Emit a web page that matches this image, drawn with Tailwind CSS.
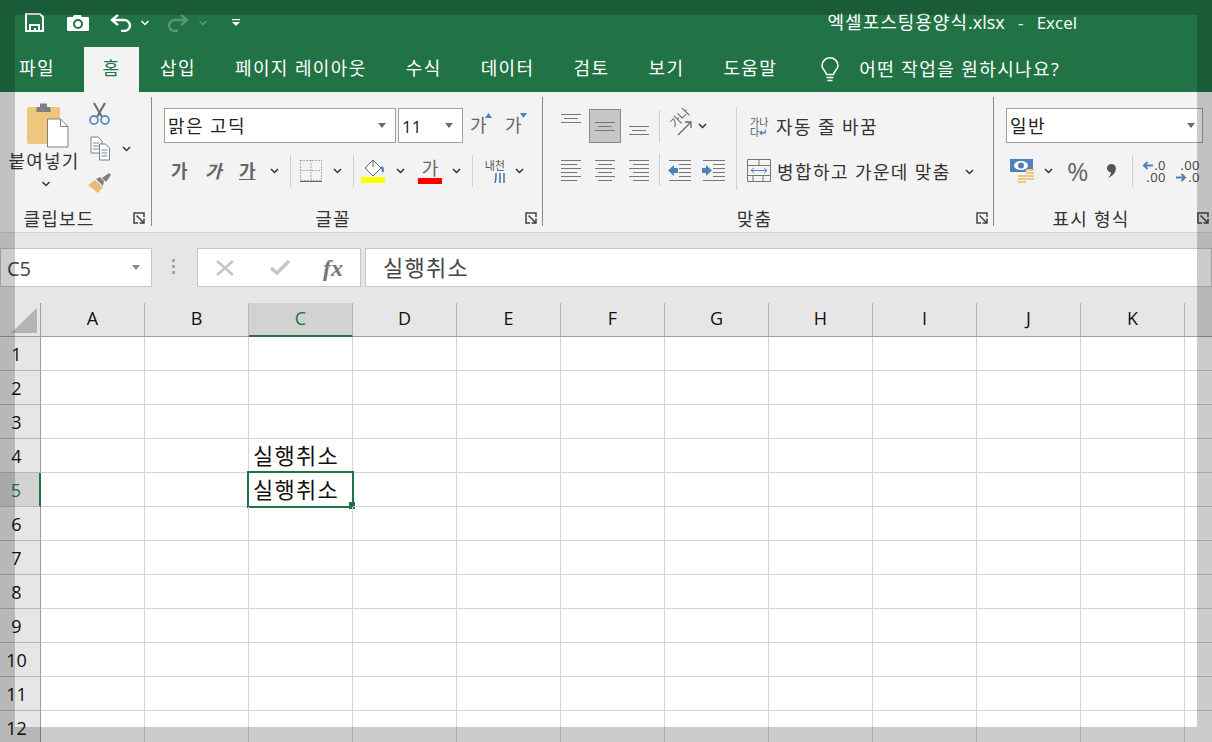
<!DOCTYPE html>
<html lang="ko">
  <head>
    <meta charset="UTF-8" />
    <script src="https://cdn.jsdelivr.net/npm/@tailwindcss/browser@4"></script>
    <title>엑셀포스팅용양식.xlsx - Excel</title>
  </head>
  <body class="relative w-[1212px] h-[742px] overflow-hidden bg-white text-[#222] font-['Open_Sans','Noto_Sans_CJK_KR',sans-serif]">
    <!-- 제목 표시줄 -->
    <div class="h-[47px] bg-[#217346] flex items-center text-white pb-[2px]">
      <svg class="ml-[25px]" width="19" height="19" viewBox="0 0 19 19" fill="none" stroke="#fff" stroke-width="2"><path d="M1 1h14l3 3v14H1z" /><path d="M5 18v-6h9v6" /><path d="M9 15h2v3H9z" fill="#fff" stroke="none" /></svg>
      <svg class="ml-[23px]" width="22" height="16" viewBox="0 0 22 16"><path fill="#fff" d="M1 2h5l1-2h7l1 2h6a1 1 0 0 1 1 1v12a1 1 0 0 1-1 1H1a1 1 0 0 1-1-1V3a1 1 0 0 1 1-1z" /><circle cx="11" cy="9" r="4" fill="none" stroke="#217346" stroke-width="2" /></svg>
      <svg class="ml-[21px]" width="22" height="18" viewBox="0 0 22 18" fill="none" stroke="#fff" stroke-width="2.4"><path d="M2 6h12a6 5.5 0 0 1 0 11h-3" /><path d="M8 0.8 2 6l6 5.2" /></svg>
      <svg class="ml-[9px]" width="8" height="6" viewBox="0 0 8 6" fill="none" stroke="#fff" stroke-width="1.5"><path d="M0.5 1 4 4.5 7.5 1" /></svg>
      <svg class="ml-[18px]" width="22" height="18" viewBox="0 0 22 18" fill="none" stroke="#5a9678" stroke-width="2.4"><path d="M20 6H8a6 5.5 0 0 0 0 11h3" /><path d="M14 0.8 20 6l-6 5.2" /></svg>
      <svg class="ml-[10px]" width="8" height="6" viewBox="0 0 8 6" fill="none" stroke="#5a9678" stroke-width="1.5"><path d="M0.5 1 4 4.5 7.5 1" /></svg>
      <svg class="ml-[25px]" width="8" height="7" viewBox="0 0 8 7"><path d="M0 0h8v1.3H0zM0 3h8L4 7z" fill="#fff" /></svg>
      <span class="ml-auto mr-[135px] text-[18px] whitespace-pre"><span class="tracking-[1px]">엑셀포스팅용양식</span>.xlsx<span class="text-[17px]">   -   Excel</span></span>
    </div>

    <!-- 탭 -->
    <div class="h-[45px] bg-[#217346] flex text-white text-[18px] tracking-[1.4px] leading-[43px]">
      <div class="w-[84px] pl-[19px]">파일</div>
      <div class="w-[55px] bg-[#f3f3f3] text-[#217346] text-center">홈</div>
      <div class="ml-[1px] pl-[20px] pr-[19px]">삽입</div>
      <div class="pl-[20px] pr-[19px]">페이지 레이아웃</div>
      <div class="pl-[20px] pr-[19px]">수식</div>
      <div class="pl-[20px] pr-[19px]">데이터</div>
      <div class="pl-[20px] pr-[19px]">검토</div>
      <div class="pl-[20px] pr-[19px]">보기</div>
      <div class="pl-[20px] pr-[19px]">도움말</div>
      <div class="ml-[25px] flex items-center gap-[20px]">
        <svg width="18" height="25" viewBox="0 0 18 25" fill="none" stroke="#fff" stroke-width="1.6"><path d="M5.5 17.5C5 14 1 12.500 1 8.500a8 7.700 0 0 1 16 0c0 4-4 5.500-4.500 9z" /><path d="M5.500 20.500h7M6.500 23.500h5" /></svg>
        <span>어떤 작업을 원하시나요?</span>
      </div>
    </div>

    <!-- 리본 -->
    <div class="h-[141px] bg-[#f3f3f3] border-b border-[#d2d2d2] flex pt-[5px] text-[#333]">
      <!-- 클립보드 -->
      <div class="w-[152px] h-[129px] border-r border-[#8a8a8a] flex flex-col">
        <div class="flex">
          <div class="w-[88px] flex flex-col items-center pt-[5px]">
            <svg class="ml-[7px]" width="42" height="46" viewBox="0 0 42 46"><rect x="0" y="5" width="33" height="37" rx="2" fill="#efc67e" /><path d="M10 5h3V1.500h7V5h3l1 5H9z" fill="#7f7f7f" /><path d="M20.500 17h13l7.500 7.500V45H20.500z" fill="#fff" stroke="#7f7f7f" stroke-width="1" /><path d="M33.500 17v7.500H41" fill="none" stroke="#7f7f7f" /></svg>
            <span class="text-[18px] tracking-[1.2px] leading-[24px] mt-[1px] whitespace-nowrap">붙여넣기</span>
            <svg class="mt-[8px] ml-[3px]" width="8" height="6" viewBox="0 0 8 6" fill="none" stroke="#333" stroke-width="1.500"><path d="M0.500 1 4 4.500 7.500 1" /></svg>
          </div>
          <div class="flex flex-col pt-[5px]">
            <svg class="ml-[1px]" width="21" height="23" viewBox="0 0 21 23" fill="none"><path d="M5 1l8 14M16 1 8 15" stroke="#6f6f6f" stroke-width="2.200" /><circle cx="5" cy="18" r="4" stroke="#5b8fc7" stroke-width="1.800" /><circle cx="16" cy="18" r="4" stroke="#5b8fc7" stroke-width="1.800" /></svg>
            <div class="flex items-center mt-[11px] ml-[2px]">
              <svg width="21" height="25" viewBox="0 0 21 25" fill="#fff" stroke="#7f7f7f"><path d="M1 1h7l4 4v12H1z" /><path d="M9.500 8h6l4 4v12h-10z" /><path d="M3 7h6M3 10h6M3 13h6M11.500 14h6M11.500 17h6M11.500 20h6" stroke="#5b8fc7" /></svg>
              <svg class="ml-[11px]" width="9" height="6" viewBox="0 0 8 6" fill="none" stroke="#333" stroke-width="1.500"><path d="M0.500 1 4 4.500 7.500 1" /></svg>
            </div>
            <svg class="mt-[11px]" width="24" height="22" viewBox="0 0 24 22"><path d="M7 8 15 15 10 21 0 13z" fill="#e9bb78" /><path d="M8 7l4-2 4 4-1 5z" fill="#7f7f7f" /><path d="M14 6l7-5 2 2-5 7z" fill="#7f7f7f" /></svg>
          </div>
        </div>
        <div class="mt-auto -mb-[3px] h-[22px] flex">
          <span class="w-[118px] pt-[1px] text-center text-[18px] tracking-[1.2px] leading-[22px]">클립보드</span>
          <svg class="ml-[15px] mt-[5px]" width="12" height="12" viewBox="0 0 12 12" fill="none" stroke="#444" stroke-width="1.500"><path d="M11 5V1H1v10h4" /><path d="M3.500 3.500 11 11M11 6.500V11H6.500" /></svg>
        </div>
      </div>

      <!-- 글꼴 -->
      <div class="w-[391px] h-[129px] border-r border-[#8a8a8a] flex flex-col">
        <div class="flex items-center pt-[11px]">
          <div class="ml-[12px] w-[232px] h-[35px] bg-white border border-[#a0a0a0] flex items-center pl-[3px] pr-[9px] pt-[2px] text-[18px] tracking-[1.4px] text-[#222]">
            맑은 고딕
            <svg class="ml-auto -mt-[2px]" width="8" height="5" viewBox="0 0 8 5"><path d="M0 0h8L4 5z" fill="#6a6a6a" /></svg>
          </div>
          <div class="ml-[2px] w-[65px] h-[35px] bg-white border border-[#a0a0a0] flex items-center pl-[3px] pr-[9px] pt-[2px] text-[17px] text-[#222]">
            11
            <svg class="ml-auto -mt-[2px]" width="8" height="5" viewBox="0 0 8 5"><path d="M0 0h8L4 5z" fill="#6a6a6a" /></svg>
          </div>
          <div class="ml-[7px] w-[23px] relative text-[18px] text-[#666]">가<svg class="absolute right-[1px] top-[1px]" width="7" height="5" viewBox="0 0 7 5"><path d="M3.500 0 7 5H0z" fill="#4f81bd" /></svg></div>
          <div class="ml-[12px] w-[23px] relative text-[18px] text-[#666]">가<svg class="absolute right-[1px] top-[1px]" width="7" height="5" viewBox="0 0 7 5"><path d="M0 0h7L3.500 5z" fill="#4f81bd" /></svg></div>
        </div>
        <div class="flex items-center h-[32px] mt-[12px] text-[#666]">
          <span class="ml-[19px] w-[34px] text-[18px] font-bold">가</span>
          <span class="w-[34px] text-[18px] font-bold italic">가</span>
          <span class="w-[31px] text-[18px] font-bold underline">가</span>
          <svg width="9" height="6" viewBox="0 0 8 6" fill="none" stroke="#333" stroke-width="1.500"><path d="M0.500 1 4 4.500 7.500 1" /></svg>
          <div class="ml-[11px] w-px h-[32px] bg-[#d0d0d0]"></div>
          <svg class="ml-[9px]" width="22" height="22" viewBox="0 0 22 22" fill="none" stroke="#666" stroke-dasharray="1 2"><path d="M.5.500h21v20H.5zM11 .5v20M.5 10.500h21" /><path d="M0 21.500h22" stroke-dasharray="none" /></svg>
          <svg class="ml-[11px]" width="9" height="6" viewBox="0 0 8 6" fill="none" stroke="#333" stroke-width="1.500"><path d="M0.500 1 4 4.500 7.500 1" /></svg>
          <div class="ml-[11px] w-px h-[32px] bg-[#d0d0d0]"></div>
          <svg class="ml-[7px]" width="25" height="24" viewBox="0 0 25 24"><path d="M4 9l8-8 8 8-8 8z" fill="#fff" stroke="#666" /><path d="M12 1v7" stroke="#666" /><path d="M20 8c2-2 3 0 3 5h-2z" fill="#4f81bd" /><path d="M0 18h24v6H0z" fill="#ff0" /></svg>
          <svg class="ml-[10px]" width="9" height="6" viewBox="0 0 8 6" fill="none" stroke="#333" stroke-width="1.500"><path d="M0.500 1 4 4.500 7.500 1" /></svg>
          <div class="ml-[13px] w-[24px] flex flex-col items-center text-[18px] leading-[19px] text-[#666]">가<div class="w-[24px] h-[6px] bg-[#f00]"></div></div>
          <svg class="ml-[10px]" width="9" height="6" viewBox="0 0 8 6" fill="none" stroke="#333" stroke-width="1.500"><path d="M0.500 1 4 4.500 7.500 1" /></svg>
          <div class="ml-[11px] w-px h-[32px] bg-[#d0d0d0]"></div>
          <div class="ml-[9px] w-[23px] flex flex-col items-end">
            <span class="text-[11px] leading-[12px] text-[#555] whitespace-nowrap">내천</span>
            <svg class="mt-[1px]" width="11" height="10" viewBox="0 0 11 10" fill="none" stroke="#3f74b5" stroke-width="1.500"><path d="M2 0C2 4 2 7 1 10M6 0v10M10 0v10" /></svg>
          </div>
          <svg class="ml-[10px]" width="9" height="6" viewBox="0 0 8 6" fill="none" stroke="#333" stroke-width="1.500"><path d="M0.500 1 4 4.500 7.500 1" /></svg>
        </div>
        <div class="mt-auto -mb-[3px] h-[22px] flex">
          <span class="w-[362px] pt-[1px] text-center text-[18px] tracking-[1.2px] leading-[22px]">글꼴</span>
          <svg class="ml-[11px] mt-[5px]" width="12" height="12" viewBox="0 0 12 12" fill="none" stroke="#444" stroke-width="1.500"><path d="M11 5V1H1v10h4" /><path d="M3.500 3.500 11 11M11 6.500V11H6.500" /></svg>
        </div>
      </div>

      <!-- 맞춤 -->
      <div class="w-[451px] h-[129px] border-r border-[#8a8a8a] flex flex-col">
        <div class="flex flex-1 pt-[12px]">
          <div class="w-[193px] flex flex-col">
            <div class="flex items-start h-[36px]">
              <svg class="ml-[18px] mt-[5px]" width="20" height="9" viewBox="0 0 20 9" stroke="#777"><path d="M0 .5h20M3 4.500h14M0 8.500h20" /></svg>
              <div class="ml-[8px] w-[32px] h-[34px] bg-[#c6c6c6] border border-[#8a8a8a] flex items-center justify-center">
                <svg width="20" height="9" viewBox="0 0 20 9" stroke="#777"><path d="M0 .5h20M3 4.500h14M0 8.500h20" /></svg>
              </div>
              <svg class="ml-[8px] mt-[17px]" width="20" height="9" viewBox="0 0 20 9" stroke="#777"><path d="M0 .5h20M3 4.500h14M0 8.500h20" /></svg>
              <div class="ml-[10px] mt-[1px] w-px h-[32px] bg-[#d0d0d0]"></div>
              <div class="ml-[8px] w-[24px] h-[30px] relative">
                <span class="absolute left-0 top-[1px] w-[24px] text-center text-[12px] leading-[16px] text-[#666] -rotate-45 whitespace-nowrap">가나</span>
                <svg class="absolute left-0 top-0" width="26" height="30" viewBox="0 0 26 30" fill="none" stroke="#666" stroke-width="1.300"><path d="M10 26 23 13M17 13h6v6" /></svg>
              </div>
              <svg class="ml-[6px] mt-[14px]" width="9" height="6" viewBox="0 0 8 6" fill="none" stroke="#333" stroke-width="1.500"><path d="M0.500 1 4 4.500 7.500 1" /></svg>
            </div>
            <div class="flex items-center h-[32px] mt-[9px]">
              <svg class="ml-[18px]" width="20" height="21" viewBox="0 0 20 21" stroke="#777"><path d="M0 .5h20M0 4.500h16M0 8.500h20M0 12.500h16M0 16.500h20M0 20.500h16" /></svg>
              <svg class="ml-[14px]" width="20" height="21" viewBox="0 0 20 21" stroke="#777"><path d="M0 .5h20M3 4.500h14M0 8.500h20M3 12.500h14M0 16.500h20M3 20.500h14" /></svg>
              <svg class="ml-[14px]" width="20" height="21" viewBox="0 0 20 21" stroke="#777"><path d="M0 .5h20M4 4.500h16M0 8.500h20M4 12.500h16M0 16.500h20M4 20.500h16" /></svg>
              <div class="ml-[10px] w-px h-[32px] bg-[#d0d0d0]"></div>
              <svg class="ml-[8px]" width="24" height="21" viewBox="0 0 24 21"><path d="M1 .5h22M11 4.500h12M11 8.500h12M11 12.500h12M11 16.500h12M1 20.500h22" stroke="#777" /><path d="M0 10.500 6 5v3h4v5H6v3z" fill="#4f81bd" /></svg>
              <svg class="ml-[10px]" width="24" height="21" viewBox="0 0 24 21"><path d="M1 .5h22M11 4.500h12M11 8.500h12M11 12.500h12M11 16.500h12M1 20.500h22" stroke="#777" /><path d="M10 10.500 4 5v3H0v5h4v3z" fill="#4f81bd" /></svg>
            </div>
          </div>
          <div class="w-px h-[83px] -mt-[2px] bg-[#d0d0d0]"></div>
          <div class="flex flex-col">
            <div class="flex items-center h-[36px] text-[18px] tracking-[1.4px]">
              <div class="ml-[13px] w-[20px] text-[10px] tracking-normal leading-[10px] text-[#555] whitespace-nowrap">가나<br />다<span class="text-[#4f81bd] font-bold">↵</span></div>
              <span class="ml-[6px] whitespace-nowrap">자동 줄 바꿈</span>
            </div>
            <div class="flex items-center h-[32px] mt-[11px] text-[18px] tracking-[1.4px]">
              <svg class="ml-[10px] -translate-y-[2px]" width="24" height="23" viewBox="0 0 24 23" fill="none"><path d="M.5.500h23v22H.5zM.5 6.500h23M.5 16.500h23M12 .5v6M6 16.500v6M16 16.500v6" stroke="#777" /><path d="M4 11.500h16M7 9l-3 2.500L7 14M17 9l3 2.500L17 14" stroke="#4f81bd" /></svg>
              <span class="ml-[6px] whitespace-nowrap">병합하고 가운데 맞춤</span>
              <svg class="ml-[14px]" width="9" height="6" viewBox="0 0 8 6" fill="none" stroke="#333" stroke-width="1.500"><path d="M0.500 1 4 4.500 7.500 1" /></svg>
            </div>
          </div>
        </div>
        <div class="-mb-[3px] h-[22px] flex">
          <span class="w-[423px] pt-[1px] text-center text-[18px] tracking-[1.2px] leading-[22px]">맞춤</span>
          <svg class="ml-[10px] mt-[5px]" width="12" height="12" viewBox="0 0 12 12" fill="none" stroke="#444" stroke-width="1.500"><path d="M11 5V1H1v10h4" /><path d="M3.500 3.500 11 11M11 6.500V11H6.500" /></svg>
        </div>
      </div>

      <!-- 표시 형식 -->
      <div class="flex-1 h-[129px] flex flex-col">
        <div class="flex pt-[11px]">
          <div class="ml-[12px] w-[197px] h-[35px] bg-white border border-[#a0a0a0] flex items-center pl-[3px] pr-[7px] pt-[2px] text-[18px] tracking-[1.4px] text-[#222]">
            일반
            <svg class="ml-auto -mt-[2px]" width="8" height="5" viewBox="0 0 8 5"><path d="M0 0h8L4 5z" fill="#6a6a6a" /></svg>
          </div>
        </div>
        <div class="flex items-center h-[32px] mt-[12px]">
          <svg class="ml-[16px]" width="24" height="24" viewBox="0 0 24 24"><path d="M0 0h23v11h-7v2H0z" fill="#4f81bd" /><ellipse cx="11" cy="6.500" rx="7" ry="4.500" fill="#fff" /><circle cx="11" cy="6.500" r="3" fill="#4f81bd" /><path d="M16 10h8v2h-8zM16 13h8v2h-8zM16 16h8v2h-8zM16 19h8v2h-8zM8 16h8v2H8zM8 19h8v2H8zM8 22h8v2H8z" fill="#efc67e" /></svg>
          <svg class="ml-[10px]" width="9" height="6" viewBox="0 0 8 6" fill="none" stroke="#333" stroke-width="1.500"><path d="M0.500 1 4 4.500 7.500 1" /></svg>
          <span class="ml-[14px] w-[30px] text-[26px] leading-[32px] text-[#666]">%</span>
          <svg class="ml-[10px] mr-[16px]" width="9" height="14" viewBox="0 0 9 14"><path d="M4.500 0a4.300 4.300 0 0 1 4.300 4.500C8.800 9 5 12.500 1 14c2-2 3-4 3-5.500A4.200 4.200 0 0 1 4.500 0z" fill="#555" /></svg>
          <div class="w-px h-[32px] bg-[#d0d0d0]"></div>
          <div class="ml-[9px] w-[24px] flex flex-col items-end text-[13px] leading-[12px] text-[#444] tracking-[0.5px]">
            <div class="flex items-center"><svg class="mr-[1px]" width="11" height="9" viewBox="0 0 11 9" fill="none" stroke="#4f81bd" stroke-width="2"><path d="M11 4.500H2M5.500 1 2 4.500 5.500 8" /></svg>.0</div>
            <div>.00</div>
          </div>
          <div class="ml-[10px] w-[24px] flex flex-col items-end text-[13px] leading-[12px] text-[#444] tracking-[0.5px]">
            <div>.00</div>
            <div class="flex items-center"><svg class="mr-[1px]" width="11" height="9" viewBox="0 0 11 9" fill="none" stroke="#4f81bd" stroke-width="2"><path d="M0 4.500h9M5.500 1 9 4.500 5.500 8" /></svg>.0</div>
          </div>
        </div>
        <div class="mt-auto -mb-[3px] h-[22px] flex">
          <span class="w-[194px] pt-[1px] text-center text-[18px] tracking-[1.2px] leading-[22px] whitespace-nowrap">표시 형식</span>
          <svg class="ml-[9px] mt-[5px]" width="12" height="12" viewBox="0 0 12 12" fill="none" stroke="#444" stroke-width="1.500"><path d="M11 5V1H1v10h4" /><path d="M3.500 3.500 11 11M11 6.500V11H6.500" /></svg>
        </div>
      </div>
    </div>

    <!-- 수식 입력줄 -->
    <div class="h-[70px] bg-[#e6e6e6] flex items-start pt-[15px]">
      <div class="w-[152px] h-[39px] bg-white border border-[#c6c6c6] flex items-center pl-[6px] pr-[11px] pt-[2px] text-[20px] text-[#444]">
        C5
        <svg class="ml-auto -mt-[2px]" width="8" height="5" viewBox="0 0 8 5"><path d="M0 0h8L4 5z" fill="#8a8a8a" /></svg>
      </div>
      <svg class="ml-[20px] mt-[11px]" width="3" height="16" viewBox="0 0 3 16"><path d="M0 0h3v3H0zM0 6h3v3H0zM0 12h3v3H0z" fill="#a6a6a6" /></svg>
      <div class="ml-[22px] w-[164px] h-[39px] bg-white border border-[#c6c6c6] flex items-center">
        <svg class="ml-[18px]" width="18" height="16" viewBox="0 0 18 16" fill="none" stroke="#c6c6c6" stroke-width="2.500"><path d="M1 1l16 14M17 1 1 15" /></svg>
        <svg class="ml-[36px]" width="20" height="15" viewBox="0 0 20 15" fill="none" stroke="#c6c6c6" stroke-width="3.500"><path d="M1 8l6 5L19 1" /></svg>
        <span class="ml-[33px] text-[24px] font-bold italic text-[#777] font-['Liberation_Serif',serif]">fx</span>
      </div>
      <div class="ml-[4px] flex-1 h-[39px] bg-white border border-[#c6c6c6] flex items-center pl-[17px] text-[22px] tracking-[1.3px] text-[#444]">실행취소</div>
    </div>

    <!-- 시트 -->
    <div id="sheet"></div>

    <!-- 바깥쪽 반투명 테두리 -->
    <div class="absolute inset-0 border-[15px] border-black/20 pointer-events-none"></div>

    <script>
      const cols = ["A", "B", "C", "D", "E", "F", "G", "H", "I", "J", "K"];
      let html = '<div class="h-[34px] flex bg-[#e6e6e6] border-b border-[#9e9e9e] text-[18px] text-[#111]">';
      html += '<div class="w-[41px] h-[33px] border-r border-[#9e9e9e] relative"><svg class="absolute left-[11px] top-[5px]" width="26" height="25" viewBox="0 0 26 25"><path d="M26 0v25H0z" fill="#b4b4b4" /></svg></div>';
      cols.forEach((c) => {
        const on = c === "C";
        html += '<div class="w-[104px] h-[33px] leading-[31px] text-center border-r border-[#b8b8b8] ' +
          (on ? 'bg-[#d2d2d2] text-[#217346] border-b-2 border-b-[#217346] h-[34px]' : '') + '">' + c + '</div>';
      });
      html += '</div>';
      for (let r = 1; r <= 12; r++) {
        const on = r === 5;
        html += '<div class="h-[34px] flex">';
        html += '<div class="w-[41px] h-[34px] pr-[7px] text-center text-[18px] leading-[34px] border-b border-b-[#b8b8b8] border-r ' +
          (on ? 'border-r-2 border-r-[#217346] bg-[#d2d2d2] text-[#217346]' : 'border-r-[#9e9e9e] bg-[#e6e6e6] text-[#111]') + '">' + r + '</div>';
        cols.forEach((c) => {
          const text = c === "C" && (r === 4 || r === 5) ? "실행취소" : "";
          html += '<div class="relative w-[104px] h-[34px] pl-[4px] border-r border-b border-[#d4d4d4] text-[22px] tracking-[1.3px] leading-[33px] text-[#111] whitespace-nowrap">' + text;
          if (c === "C" && on) {
            html += '<div class="absolute -left-[2px] -top-[2px] w-[107px] h-[37px] border-2 border-[#217346]"></div>';
            html += '<div class="absolute -right-[3px] -bottom-[3px] w-[6px] h-[7px] bg-[#217346]"></div>';
          }
          html += '</div>';
        });
        html += '<div class="flex-1 h-[34px] border-b border-[#d4d4d4]"></div></div>';
      }
      document.getElementById("sheet").innerHTML = html;
    </script>
  </body>
</html>
